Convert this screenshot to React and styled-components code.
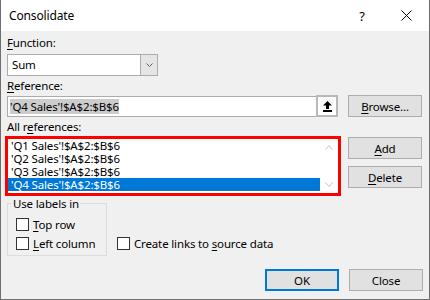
import React from 'react';
import styled, { createGlobalStyle } from 'styled-components';

const Global = createGlobalStyle`
  html, body { margin: 0; padding: 0; background: #ffffff; }
  body {
    font-family: "Segoe UI", "Noto Sans", "Open Sans", sans-serif;
    font-size: 11.5px;
    letter-spacing: -0.15px;
    color: #000;
  }
  * { box-sizing: border-box; }
`;

const Window = styled.div`
  width: 430px;
  height: 300px;
  border: 1px solid #6e6e6e;
  border-top: none;
  background: #f0f0f0;
  display: flex;
  flex-direction: column;
`;

const TitleBar = styled.div`
  height: 31px;
  background: #ffffff;
  display: flex;
  align-items: center;
  padding-left: 8px;
  font-size: 12px;
`;

const Title = styled.div`
  flex: 1;
`;

const TitleButton = styled.div`
  width: 46px;
  height: 31px;
  display: flex;
  align-items: center;
  justify-content: center;
  font-size: 13px;
  padding-left: ${p => p.$pl || 0}px;
`;

const Body = styled.div`
  padding: 0 6px;
  display: flex;
  flex-direction: column;
`;

const Row = styled.div`
  display: grid;
  grid-template-columns: 331px 74px;
  column-gap: 10px;
  margin-top: ${p => p.$mt || 0}px;
  align-items: start;
`;

const Label = styled.div`
  height: 16px;
  line-height: 16px;
  margin-top: ${p => p.$mt || 0}px;
`;

const U = styled.span`
  text-decoration: underline;
  text-underline-offset: 2px;
`;

const Select = styled.div`
  width: 151px;
  height: 22px;
  margin-top: ${p => p.$mt || 0}px;
  display: flex;
  background: #fff;
  border: 1px solid #acacac;
`;

const SelectValue = styled.div`
  flex: 1;
  padding-left: 4px;
  line-height: 20px;
`;

const SelectArrow = styled.div`
  width: 17px;
  background: #e5e5e5;
  border-left: 1px solid #acacac;
  display: flex;
  align-items: center;
  justify-content: center;
`;

const RefField = styled.div`
  display: flex;
`;

const TextInput = styled.div`
  flex: 1;
  height: 21px;
  margin-top: 1px;
  background: #fff;
  border: 1px solid #acacac;
  border-right: none;
  padding: 2px 2px;
  display: flex;
  align-items: center;
`;

const Selected = styled.span`
  background: #cccccc;
  line-height: 15px;
`;

const CollapseButton = styled.div`
  width: 22px;
  height: 22px;
  border: 2px solid #b9b9b9;
  background: #fff;
  display: flex;
  align-items: center;
  justify-content: center;
`;

const Button = styled.div`
  width: 74px;
  height: 22px;
  background: #e1e1e1;
  border: ${p => (p.$default ? '2px solid #0078d7' : '1px solid #adadad')};
  display: flex;
  align-items: center;
  justify-content: center;
  margin-top: ${p => p.$mt || 0}px;
`;

const ButtonStack = styled.div`
  display: flex;
  flex-direction: column;
`;

const ListBox = styled.div`
  height: 60px;
  border: 3px solid #ff0000;
  margin-left: -2px;
  margin-right: -3px;
  background: #fff;
  display: flex;
`;

const Items = styled.div`
  flex: 1;
  display: flex;
  flex-direction: column;
`;

const Item = styled.div`
  height: 13px;
  line-height: 13px;
  padding-left: 3px;
  background: ${p => (p.$sel ? '#0078d7' : 'transparent')};
  color: ${p => (p.$sel ? '#fff' : '#000')};
  white-space: nowrap;
`;

const ScrollBar = styled.div`
  width: 18px;
  display: flex;
  flex-direction: column;
  justify-content: space-between;
  align-items: center;
  padding: 6px 0 6px;
`;

const LowerRow = styled.div`
  display: flex;
  align-items: flex-end;
  margin-top: 1px;
`;

const Group = styled.fieldset`
  width: 100px;
  height: 59px;
  margin: 0;
  padding: 0 0 0 8px;
  border: 1px solid #dcdcdc;
  display: flex;
  flex-direction: column;
`;

const Legend = styled.legend`
  padding: 0 1px;
  margin-left: -4px;
  line-height: 13px;
`;

const Check = styled.label`
  display: flex;
  align-items: center;
  height: 13px;
  margin-top: ${p => p.$mt || 0}px;
  margin-left: ${p => p.$ml || 0}px;
  margin-bottom: ${p => p.$mb || 0}px;
  white-space: nowrap;
`;

const Box = styled.span`
  width: 13px;
  height: 13px;
  border: 1px solid #333333;
  background: #fff;
  margin-right: 4px;
  flex: none;
`;

const Footer = styled.div`
  display: flex;
  justify-content: flex-end;
  gap: 10px;
  margin-top: 13px;
`;

const Chevron = ({ up, color = '#606060', w = 7, h = 4 }) => (
  <svg width={w} height={h} viewBox={`0 0 ${w} ${h}`}>
    <polyline
      points={
        up
          ? `0.5,${h - 0.5} ${w / 2},0.5 ${w - 0.5},${h - 0.5}`
          : `0.5,0.5 ${w / 2},${h - 0.5} ${w - 0.5},0.5`
      }
      fill="none"
      stroke={color}
      strokeWidth="1"
    />
  </svg>
);

const UpArrow = () => (
  <svg width="9" height="11" viewBox="0 0 9 11">
    <polygon points="4.5,0 9,4.5 6,4.5 6,8 3,8 3,4.5 0,4.5" fill="#000" />
    <rect x="0" y="9" width="9" height="2" fill="#000" />
  </svg>
);

const refs = [
  "'Q1 Sales'!$A$2:$B$6",
  "'Q2 Sales'!$A$2:$B$6",
  "'Q3 Sales'!$A$2:$B$6",
  "'Q4 Sales'!$A$2:$B$6",
];

export default function App() {
  return (
    <>
      <Global />
      <Window>
        <TitleBar>
          <Title>Consolidate</Title>
          <TitleButton $pl={4}>?</TitleButton>
          <TitleButton>
            <svg width="11" height="11" viewBox="0 0 11 11">
              <path d="M0.5 0.5 L10.5 10.5 M10.5 0.5 L0.5 10.5" stroke="#000" strokeWidth="1" />
            </svg>
          </TitleButton>
        </TitleBar>
        <Body>
          <Label $mt={4}><U>F</U>unction:</Label>
          <Select $mt={3}>
            <SelectValue>Sum</SelectValue>
            <SelectArrow><Chevron /></SelectArrow>
          </Select>
          <Label $mt={2}><U>R</U>eference:</Label>
          <Row $mt={1}>
            <RefField>
              <TextInput><Selected>'Q4 Sales'!$A$2:$B$6</Selected></TextInput>
              <CollapseButton><UpArrow /></CollapseButton>
            </RefField>
            <Button>
              <span><U>B</U>rowse...</span>
            </Button>
          </Row>
          <Label $mt={2}>All r<U>e</U>ferences:</Label>
          <Row $mt={1}>
            <ListBox>
              <Items>
                {refs.map((r, i) => (
                  <Item key={r} $sel={i === 3}>{r}</Item>
                ))}
              </Items>
              <ScrollBar>
                <Chevron up color="#c2c2c2" w={8} h={5} />
                <Chevron color="#c2c2c2" w={8} h={5} />
              </ScrollBar>
            </ListBox>
            <ButtonStack>
              <Button $mt={1}><span><U>A</U>dd</span></Button>
              <Button $mt={7}><span><U>D</U>elete</span></Button>
            </ButtonStack>
          </Row>
          <LowerRow>
            <Group>
              <Legend>Use labels in</Legend>
              <Check $mt={8}><Box /><span><U>T</U>op row</span></Check>
              <Check $mt={6}><Box /><span><U>L</U>eft column</span></Check>
            </Group>
            <Check $ml={10} $mb={6}><Box /><span>Create links to <U>s</U>ource data</span></Check>
          </LowerRow>
          <Footer>
            <Button $default>OK</Button>
            <Button>Close</Button>
          </Footer>
        </Body>
      </Window>
    </>
  );
}
